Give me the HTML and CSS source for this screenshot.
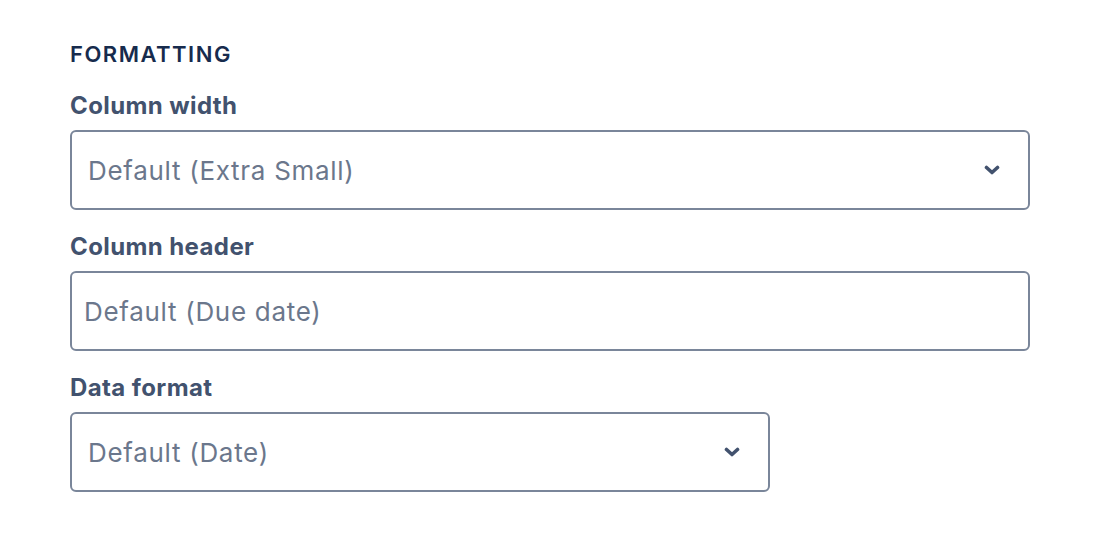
FILE: index.html
```html
<!DOCTYPE html>
<html lang="en">
<head>
    <meta charset="UTF-8">
    <title>Formatting</title>
    <link rel="stylesheet" href="styles.css">
</head>
<body>
    <div class="panel">
        <h2 class="section-title">FORMATTING</h2>

        <div class="field">
            <label class="field-label">Column width</label>
            <div class="select wide">
                <span class="select-value">Default (Extra Small)</span>
                <svg class="chevron" width="16" height="10" viewBox="0 0 16 10">
                    <path d="M2.5 2.5 L8 7.5 L13.5 2.5" fill="none" stroke="#42526e" stroke-width="3.6" stroke-linecap="round" stroke-linejoin="round"/>
                </svg>
            </div>
        </div>

        <div class="field">
            <label class="field-label">Column header</label>
            <input class="text-input" type="text" placeholder="Default (Due date)">
        </div>

        <div class="field">
            <label class="field-label">Data format</label>
            <div class="select narrow">
                <span class="select-value">Default (Date)</span>
                <svg class="chevron" width="16" height="10" viewBox="0 0 16 10">
                    <path d="M2.5 2.5 L8 7.5 L13.5 2.5" fill="none" stroke="#42526e" stroke-width="3.6" stroke-linecap="round" stroke-linejoin="round"/>
                </svg>
            </div>
        </div>
    </div>
</body>
</html>
```
FILE: styles.css
```css
body {
    margin: 0;
    background: #fff;
    font-family: Inter, 'Noto Sans', sans-serif;
}
.panel {
    padding: 40px 0 0 70px;
    width: 960px;
}
.section-title {
    margin: 0 0 24px;
    font-size: 22px;
    font-weight: 600;
    letter-spacing: 1.5px;
    color: #172b4d;
    line-height: 28px;
}
.field {
    display: flex;
    flex-direction: column;
    margin-bottom: 23px;
}
.field-label {
    font-size: 24px;
    font-weight: 700;
    letter-spacing: 0.4px;
    color: #42526e;
    line-height: 28px;
    margin-bottom: 10px;
}
.select {
    box-sizing: border-box;
    height: 80px;
    border: 2px solid #7a869a;
    border-radius: 6px;
    display: flex;
    align-items: center;
    justify-content: space-between;
    padding: 0 28px 0 16px;
}
.select.wide {
    width: 960px;
}
.select.narrow {
    width: 700px;
}
.select-value {
    font-size: 26px;
    letter-spacing: 0.7px;
    color: #6b778c;
}
.chevron {
    display: block;
}
.text-input {
    box-sizing: border-box;
    width: 960px;
    height: 80px;
    border: 2px solid #7a869a;
    border-radius: 6px;
    padding: 0 12px;
    font-family: inherit;
    font-size: 26px;
    letter-spacing: 0.7px;
    color: #172b4d;
    outline: none;
}
.text-input::placeholder {
    color: #6b778c;
    opacity: 1;
}
```
